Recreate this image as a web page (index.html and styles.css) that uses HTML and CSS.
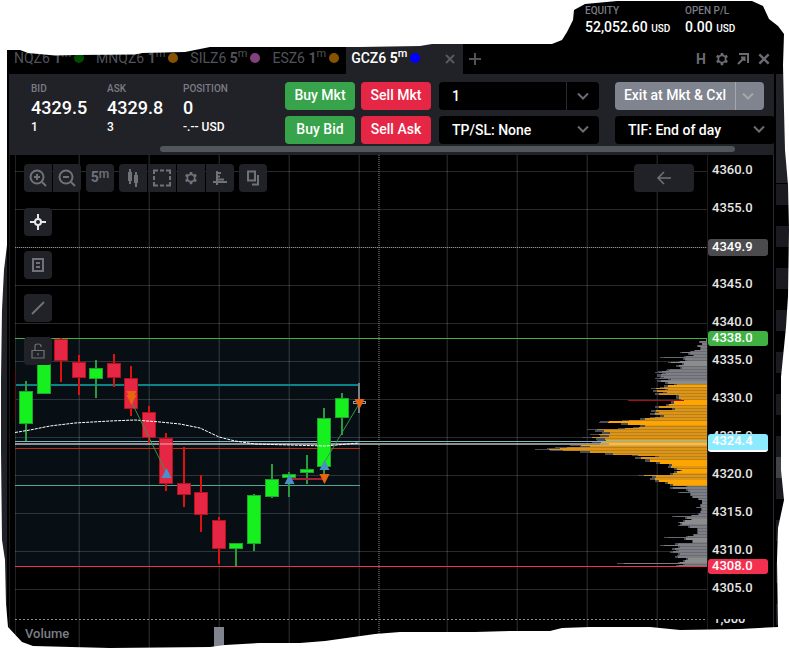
FILE: index.html
```
<!DOCTYPE html>
<html lang="en">
<head>
    <meta charset="utf-8">
    <title>GCZ6 5m</title>
    <link rel="stylesheet" href="styles.css">
</head>

<body>
    <svg class="sprite">
        <symbol id="chevron" viewBox="0 0 12 12"><path d="M1 3.500l5 5 5-5"/></symbol>
        <symbol id="gear" viewBox="0 0 16 16">
            <circle cx="8" cy="8" r="4.200"/>
            <path stroke-width="3" d="M8 1V4M8 12v3M2 4.500l2.500 1.500M11.500 10l2.500 1.500M2 11.500L4.500 10M11.500 6L14 4.500"/>
        </symbol>
        <symbol id="cross" viewBox="0 0 12 12"><path d="M2 2l8 8M10 2l-8 8"/></symbol>
    </svg>

    <div class="app">
        <header class="account">
            <div class="balance">
                <div class="label">EQUITY</div>
                <div class="value">52,052.60 <small>USD</small></div>
            </div>
            <div class="balance">
                <div class="label">OPEN P/L</div>
                <div class="value">0.00 <small>USD</small></div>
            </div>
        </header>

        <div class="workspace">
            <div class="neighbour left"></div>

            <main class="panel">
                <nav class="tabs">
                    <a href="#" class="tab">NQZ6 <b>1</b><sup>m</sup><i class="dot green"></i></a>
                    <a href="#" class="tab">MNQZ6 <b>1</b><sup>m</sup><i class="dot amber"></i></a>
                    <a href="#" class="tab">SILZ6 <b>5</b><sup>m</sup><i class="dot purple"></i></a>
                    <a href="#" class="tab">ESZ6 <b>1</b><sup>m</sup><i class="dot amber"></i></a>
                    <a href="#" class="tab active">GCZ6 <b>5</b><sup>m</sup><i class="dot blue"></i><svg class="close"><use href="#cross"/></svg></a>
                    <button class="add" aria-label="Add tab"><svg viewBox="0 0 14 14"><path d="M7 1v12M1 7h12"/></svg></button>
                    <div class="windowTools">
                        <button>H</button>
                        <button aria-label="Settings"><svg><use href="#gear"/></svg></button>
                        <button aria-label="Pop out"><svg viewBox="0 0 14 14"><path d="M3 2h9v9M5 5.500h3.500V9M8.500 5.500L2 12"/></svg></button>
                        <button aria-label="Close"><svg><use href="#cross"/></svg></button>
                    </div>
                </nav>

                <section class="orderBar">
                    <div class="orderRow">
                        <div class="quote">
                            <div class="label">BID</div>
                            <div class="price">4329.5</div>
                            <div class="size">1</div>
                        </div>
                        <div class="quote">
                            <div class="label">ASK</div>
                            <div class="price">4329.8</div>
                            <div class="size">3</div>
                        </div>
                        <div class="quote position">
                            <div class="label">POSITION</div>
                            <div class="price">0</div>
                            <div class="size">-.-- USD</div>
                        </div>
                        <div class="trade">
                            <button class="buy">Buy Mkt</button>
                            <button class="sell">Sell Mkt</button>
                            <button class="buy">Buy Bid</button>
                            <button class="sell">Sell Ask</button>
                        </div>
                        <div class="fields">
                            <div class="split">
                                <input type="text" value="1" aria-label="Quantity">
                                <button aria-label="Quantities"><svg class="chev"><use href="#chevron"/></svg></button>
                            </div>
                            <div class="select">
                                <select aria-label="TP/SL"><option>TP/SL: None</option></select>
                                <svg class="chev"><use href="#chevron"/></svg>
                            </div>
                        </div>
                        <div class="fields last">
                            <div class="split exit">
                                <button class="main">Exit at Mkt &amp; Cxl</button>
                                <button aria-label="Exit options"><svg class="chev"><use href="#chevron"/></svg></button>
                            </div>
                            <div class="select">
                                <select aria-label="TIF"><option>TIF: End of day</option></select>
                                <svg class="chev"><use href="#chevron"/></svg>
                            </div>
                        </div>
                    </div>
                    <div class="scrollbar"></div>
                </section>

                <section class="chart">
                    <div class="plot">
                        <svg id="plot" viewBox="15 155 693 493" preserveAspectRatio="xMinYMin slice"></svg>

                        <div class="toolbar">
                            <div class="group">
                                <button aria-label="Zoom in"><svg viewBox="0 0 18 18"><circle cx="8" cy="8" r="6.500"/><path d="M13 13l4 4M8 5v6M5 8h6"/></svg></button>
                                <button aria-label="Zoom out"><svg viewBox="0 0 18 18"><circle cx="8" cy="8" r="6.500"/><path d="M13 13l4 4M5 8h6"/></svg></button>
                            </div>
                            <div class="group">
                                <button class="interval">5<sup>m</sup></button>
                            </div>
                            <div class="group">
                                <button aria-label="Chart type"><svg viewBox="0 0 18 18"><path d="M6 0v15M12 3v15"/><path stroke-width="4" d="M6 3v9M12 6v8"/></svg></button>
                                <button aria-label="Select area"><svg viewBox="0 0 18 18"><path d="M1 5V1.500h4M7 1.500h4M13 1.500h4V5M17 7v4M17 13v3.500h-4M11 16.500H7M5 16.500H1V13M1 11V7"/></svg></button>
                                <button class="small" aria-label="Chart settings"><svg><use href="#gear"/></svg></button>
                                <button aria-label="Volume profile"><svg viewBox="0 0 18 18"><path d="M6 2v14M2 13h14M6 4h4M6 7.500h3M6 10.500h7" /></svg></button>
                            </div>
                            <div class="group">
                                <button aria-label="Copy layout"><svg viewBox="0 0 18 18"><path d="M4 2.500h7v9H4zM14 6v9.500H8"/></svg></button>
                            </div>
                        </div>

                        <div class="sideTools">
                            <button class="on" aria-label="Crosshair"><svg viewBox="0 0 18 18"><circle cx="9" cy="9" r="3"/><path d="M9 1v5M9 12v5M1 9h5M12 9h5"/></svg></button>
                            <button aria-label="Notes"><svg viewBox="0 0 18 18"><path d="M4 3h10v12H4zM7 7h4M7 11h4"/></svg></button>
                            <button aria-label="Line"><svg viewBox="0 0 18 18"><path d="M3 15L15 3"/></svg></button>
                            <button aria-label="Lock"><svg viewBox="0 0 18 18"><path stroke-width="1.200" d="M3 8.500h12v7.500H3zM6 8.500V4q0-2 3-2t3 2v1M9 11v2.500"/></svg></button>
                        </div>

                        <button class="back" aria-label="Back"><svg viewBox="0 0 18 18"><path stroke-width="1.500" d="M16 9H3M9 3L3 9l6 6"/></svg></button>
                        <div class="volumeLabel">Volume</div>
                    </div>

                    <div class="axis">
                        <div>4360.0</div>
                        <div>4355.0</div>
                        <div>4350.0</div>
                        <div>4345.0</div>
                        <div>4340.0</div>
                        <div>4335.0</div>
                        <div>4330.0</div>
                        <div>4325.0</div>
                        <div>4320.0</div>
                        <div>4315.0</div>
                        <div>4310.0</div>
                        <div>4305.0</div>
                        <span class="tag cursor">4349.9</span>
                        <span class="tag high">4338.0</span>
                        <span class="tag last">4324.4</span>
                        <span class="tag low">4308.0</span>
                        <span class="volumeScale">1,000</span>
                    </div>
                </section>
            </main>

            <div class="neighbour right"></div>
        </div>

        <!-- ragged white border around the whole window -->
        <svg class="edge" viewBox="0 0 789 648" preserveAspectRatio="none">
            <path fill-rule="evenodd" d="M-1-1H790V649H-1Z
                M7 50L20 50L28 53L55 55.500L75 55L135 54.500L142 53L185 52L210 47L360 47L420 46L432 44L552 44L562 40L567 32L573 20L574 10L585 4L617 1L660 1
                L752 1L763 6L769 19L778 26L784 34L783 65L784 110L785 150L788 185L789 230L788 296L786 327L781 377L781 470L784 500L778 528L777 560L778 627
                L740 629L680 630L650 627L590 627L562 628L550 631L512 631L475 632L400 632L375 634L325 641L300 643L260 643L225 645L210 647L110 648L33 646
                L22 642L8 627L6 604L5 560L2 540L1 450L1 380L2 310L4 270L7 245Z"/>
        </svg>
    </div>

    <script src="chart.js"></script>
</body>
</html>
```
FILE: styles.css
```
* {
    box-sizing: border-box;
}
body {
    margin: 0;
    background: #fff;
    font-family: Roboto, "Liberation Sans", sans-serif;
    font-weight: 500;
    color: #fff;
}
button, input, select {
    font: inherit;
    color: inherit;
    border: 0;
    margin: 0;
    padding: 0;
    background: none;
}
svg {
    display: block;
    fill: none;
    stroke: currentColor;
    stroke-width: 2;
}
.sprite {
    display: none;
}
.app {
    position: relative;
    overflow: hidden;
    min-height: 100vh;
    background: #000;
}
.edge {
    position: absolute;
    top: 0;
    left: 0;
    width: 100%;
    height: 100%;
    fill: #fff;
    stroke: none;
    pointer-events: none;
}

/* account summary */
.account {
    display: flex;
    justify-content: flex-end;
    height: 44px;
    padding: 5px 4px 0 0;
}
.balance {
    width: 100px;
}
.label {
    font-size: 10px;
    line-height: 12px;
    color: #797c85;
}
.value {
    font-size: 14px;
    line-height: 20px;
}
.value small {
    font-size: 10px;
}

/* panel and its neighbours */
.workspace {
    display: flex;
}
.neighbour {
    margin-top: 30px;
    background: #212227;
}
.neighbour.left {
    width: 9px;
    border-right: 2px solid #000;
}
.neighbour.right {
    width: 13px;
    background:
        linear-gradient(#212227 0 109px, transparent 109px 383px, #3f4246 383px 404px, transparent 404px),
        repeating-linear-gradient(#1a1a20 0 5px, #000 5px 26px, #1a1a20 26px 42px);
}
.panel {
    flex: 1;
    min-width: 0;
    margin-right: 2px;
}

/* tabs */
.tabs {
    display: flex;
    height: 30px;
    color: #50535a;
}
.tab {
    display: flex;
    align-items: center;
    padding: 0 7px 2px 5px;
    font-size: 14px;
    font-weight: 400;
    white-space: pre;
    color: inherit;
    text-decoration: none;
}
.tab b {
    font-weight: 700;
}
.tab sup {
    font-size: 11px;
    line-height: 12px;
    margin-bottom: 8px;
}
.tab.active {
    width: 117px;
    background: #212227;
    color: #fff;
    font-weight: 500;
}
.dot {
    width: 10px;
    height: 10px;
    margin-left: 3px;
    border-radius: 50%;
}
.green { background: #004b00; }
.amber { background: #875300; }
.purple { background: #80427f; }
.blue { background: #00f; }
.close {
    width: 12px;
    height: 12px;
    margin-left: auto;
    margin-top: 2px;
    color: #56595f;
}
.add {
    width: 24px;
    padding: 0 5px;
}
.add svg {
    width: 14px;
    height: 14px;
}
.windowTools {
    display: flex;
    align-items: center;
    gap: 7px;
    margin-left: auto;
    padding-right: 3px;
    font-size: 14px;
    font-weight: 700;
    color: #6a6c72;
}
.windowTools button {
    width: 14px;
}
.windowTools svg {
    width: 14px;
    height: 14px;
}

/* order entry */
.orderBar {
    overflow: hidden;
    padding: 8px 0 3px 22px;
    background: #212227;
}
.orderRow {
    display: flex;
    height: 62px;
}
.quote {
    flex: none;
    width: 76px;
}
.quote.position {
    width: 102px;
}
.quote .label {
    margin-top: 1px;
}
.price {
    font-size: 18px;
    line-height: 26px;
}
.size {
    font-size: 12px;
    line-height: 12px;
}
.trade {
    display: grid;
    flex: none;
    grid-template-columns: 70px 70px;
    gap: 6px;
    margin-right: 8px;
}
.trade button, .split, .select {
    height: 28px;
    border-radius: 4px;
    font-size: 14px;
}
.trade button {
    padding-bottom: 2px;
}
.buy { background: #37a34a; }
.sell { background: #e62645; }
.fields {
    display: flex;
    flex: none;
    flex-direction: column;
    gap: 6px;
    width: 160px;
    margin-right: 16px;
}
.split {
    display: flex;
    overflow: hidden;
    background: #000;
}
.split input {
    flex: 1;
    min-width: 0;
    padding-left: 13px;
}
.split button {
    width: 33px;
    padding-left: 10px;
    border-left: 1px solid #2a2b30;
    color: #6a6c72;
}
.split.exit {
    width: 149px;
    background: #80848e;
}
.exit button {
    width: 29px;
    padding-left: 6px;
    border-left: 1px solid #a4a7ae;
    color: #a4a7ae;
}
.exit .main {
    flex: 1;
    padding: 0 0 2px;
    border: 0;
    color: #fff;
}
.select {
    position: relative;
    background: #000;
}
.select select {
    appearance: none;
    width: 100%;
    height: 28px;
    padding-left: 13px;
}
.chev {
    width: 12px;
    height: 12px;
}
.select .chev {
    position: absolute;
    top: 7px;
    right: 10px;
    color: #6a6c72;
    pointer-events: none;
}
.scrollbar {
    height: 6px;
    margin: 2px 39px 0 129px;
    border-radius: 3px;
    background: #50565a;
}

/* chart */
.chart {
    display: flex;
    border-left: 1px solid #1a1a1c;
    border-right: 1px solid #2a2b30;
    padding-left: 5px;
}
.plot {
    position: relative;
    flex: 1;
    min-width: 0;
}
.plot button {
    display: flex;
    align-items: center;
    justify-content: center;
    width: 28px;
    height: 28px;
    background: #212227;
    color: #6f7279;
}
.plot button svg {
    width: 18px;
    height: 18px;
}
.plot .small svg {
    width: 14px;
    height: 14px;
}
.toolbar {
    position: absolute;
    top: 9px;
    left: 9px;
    display: flex;
    gap: 5px;
}
.group {
    display: flex;
    gap: 1px;
    overflow: hidden;
    border-radius: 4px;
}
.plot .interval {
    padding-bottom: 2px;
    font-size: 14px;
    font-weight: 700;
}
.interval sup {
    font-size: 12px;
    font-weight: 500;
    line-height: 12px;
    margin-bottom: 6px;
}
.sideTools {
    position: absolute;
    top: 53px;
    left: 9px;
    display: grid;
    gap: 15px;
}
.sideTools button {
    border-radius: 4px;
}
.plot .on {
    color: #e4e6f0;
}
.plot .back {
    position: absolute;
    top: 9px;
    right: 14px;
    width: 60px;
    border-radius: 4px;
}
.volumeLabel {
    position: absolute;
    top: 471px;
    left: 10px;
    font-size: 13px;
    line-height: 16px;
    color: #7b7e87;
}

/* price axis */
.axis {
    position: relative;
    width: 66px;
    margin-left: -1px;
    padding-left: 4px;
    border-left: 1px solid #1c1c1c;
    font-size: 13px;
    line-height: 38px;
    color: #e6e6e6;
}
.axis div {
    height: 38px;
}
.axis div:first-child {
    margin-top: -4px;
}
.tag {
    position: absolute;
    left: 0;
    width: 60px;
    height: 15px;
    padding-left: 4px;
    border-radius: 3px;
    line-height: 14px;
    color: #fff;
}
.tag.cursor {
    top: 84px;
    height: 17px;
    line-height: 16px;
    background: #4b4b4d;
}
.tag.high {
    top: 176px;
    background: #40b244;
}
.tag.last {
    top: 279px;
    height: 18px;
    background: #8ceaff;
    border-bottom: 2px solid #fff;
}
.tag.low {
    top: 404px;
    background: #f43050;
}
.volumeScale {
    position: absolute;
    top: 464px;
    left: 5px;
    height: 10px;
    overflow: hidden;
    line-height: 0;
}

/* plot drawing */
#plot {
    width: 100%;
    stroke-width: 1;
    overflow: hidden;
}
```
FILE: chart.js
```
const plot = document.getElementById("plot");

function draw(tag, attrs) {
    const el = document.createElementNS("http://www.w3.org/2000/svg", tag);
    for (const key in attrs) el.setAttribute(key, attrs[key]);
    plot.appendChild(el);
}
function rect(x, y, width, height, fill, opacity = 1) {
    draw("rect", { x, y, width, height, fill, opacity, stroke: "none" });
}
function line(d, stroke, extra) {
    draw("path", Object.assign({ d, stroke }, extra));
}

// value area box
rect(15, 338, 345, 228, "#070f15");

// grid
for (const x of [15, 79, 149, 219, 289, 359, 447, 517, 587, 657]) {
    rect(x - 1, 155, 1, 493, "#fff", 0.06);
    rect(x, 155, 1, 493, "#fff", 0.13);
}
for (let y = 171; y < 600; y += 38) rect(15, y, 693, 1, "#fff", 0.16);

// volume profile: [y, left edge]
const profile = [
    [339, 706], [341, 699], [343, 702], [345, 697], [347, 700], [350, 694], [351, 690], [352, 680],
    [353, 688], [355, 693], [356, 684], [357, 660], [358, 683], [360, 685], [361, 678], [362, 668], [363, 682],
    [365, 676], [367, 680], [369, 667], [370, 666], [371, 658], [372, 655], [373, 662], [374, 657], [377, 660],
    [378, 655], [379, 668], [380, 657], [381, 657], [382, 665], [384, 674], [385, 664], [387, 660], [388, 651],
    [389, 665], [390, 653], [392, 663], [393, 655], [395, 676], [399, 679], [400, 671], [404, 666], [406, 655],
    [408, 672], [410, 651], [412, 655], [413, 650], [415, 660], [417, 650], [418, 640], [420, 622], [421, 600],
    [422, 599], [423, 621], [425, 640], [427, 633], [428, 618], [429, 587], [430, 595], [432, 602], [434, 590],
    [435, 600], [437, 582], [438, 596], [440, 597], [441, 592], [443, 600], [445, 570], [446, 580], [447, 555],
    [448, 547], [449, 535], [450, 550], [451, 580], [453, 605], [455, 632], [456, 655], [457, 635], [459, 645],
    [460, 645], [462, 656], [464, 669], [466, 668], [468, 674], [470, 680], [471, 674], [473, 670], [475, 638],
    [476, 652], [478, 650], [480, 655], [482, 665], [484, 670], [486, 686], [487, 670], [489, 686], [491, 688],
    [492, 678], [493, 690], [496, 692], [498, 698], [500, 702], [504, 700], [507, 696], [508, 701], [511, 700],
    [513, 698], [515, 691], [516, 672], [517, 685], [519, 691], [520, 683], [522, 678], [523, 680], [525, 678],
    [526, 688], [528, 697], [532, 697], [534, 693], [536, 686], [537, 664], [538, 684], [540, 692], [542, 692],
    [543, 675], [545, 660], [546, 678], [548, 672], [550, 676], [551, 670], [553, 678], [555, 677], [556, 675],
    [558, 686], [560, 683], [562, 678], [563, 617], [564, 683], [565, 676]
];
// price rows drawn in the brighter shade
const bright = [[361, 365], [381, 383], [385, 386], [400, 404], [421, 424], [440, 445], [460, 465], [469, 472], [480, 484], [519, 523], [538, 541], [558, 562]];

for (let i = 0; i < profile.length; i++) {
    const end = i + 1 < profile.length ? profile[i + 1][0] : 566;
    for (let y = profile[i][0]; y < end; y++) {
        const x = profile[i][1];
        const value = y >= 384 && y < 486;
        const tip = x + Math.round((708 - x) * 0.08);
        let color = value ? (y % 3 ? "#de9414" : "#b8811f") : (y % 3 ? "#7d7f85" : "#696b72");
        if (bright.some(r => y >= r[0] && y <= r[1])) color = value ? "#ffa500" : "#8c8c8c";
        rect(x, y, 708 - x, 1, "#4a4d58");
        rect(tip, y, 708 - tip, 1, color);
    }
}
rect(628, 400, 56, 1, "#a80d12");

// levels
rect(15, 338, 693, 1, "#40b244");
rect(15, 384, 345, 2, "#0c8388");
rect(15, 441, 693, 1, "#79b9c9");
rect(15, 443, 693, 2, "#c9c9c9", 0.7);
rect(15, 448, 345, 1, "#c22e0c");
rect(15, 485, 345, 1, "#4fa894");
rect(15, 566, 693, 1, "#f43050");

// candles: [up, high, body top, body bottom, low]
const candles = [
    [1, 381, 391, 424, 441], [1, 350, 362, 394, 394], [0, 338, 339, 361, 382], [0, 355, 362, 378, 395],
    [1, 360, 368, 379, 398], [0, 354, 363, 378, 387], [0, 366, 378, 409, 416], [0, 406, 412, 438, 443],
    [0, 433, 438, 484, 491], [0, 447, 483, 495, 507], [0, 475, 492, 515, 532], [0, 517, 520, 549, 564],
    [1, 543, 543, 549, 566], [1, 494, 495, 544, 551], [1, 464, 479, 497, 498], [1, 472, 474, 478, 497],
    [1, 455, 469, 473, 484], [1, 408, 418, 467, 474], [1, 393, 398, 418, 435]
];
candles.forEach(([up, high, top, bottom, low], i) => {
    const x = Math.round(26 + i * 17.54);
    rect(x - 1, high, 2, low - high, up ? "#2a9a3c" : "#e01010");
    draw("rect", {
        x: x - 6.5, y: top + 0.5, width: 13, height: bottom - top - 1,
        fill: up ? "#16f01e" : "#e62645", stroke: up ? "#1fa32e" : "#b3131f"
    });
});
rect(358, 383, 2, 30, "#7d7f87");
draw("rect", { x: 353.5, y: 401.5, width: 12, height: 2, fill: "none", stroke: "#9a9ca3" });
rect(15, 370, 1, 51, "#5c1015");
rect(160, 443, 13, 2, "#fff", 0.3);

// moving average
line("M15 432.500L30 430L50 426L75 423L110 421L135 420L160 422L180 424L200 428L219 437L235 441L255 444L289 445L325 446L359 443",
    "#fff", { "stroke-dasharray": "3 1" });

// executions
line("M132 403L166 472M324 463L359 404", "#2f9a45");
rect(289, 478, 35, 2, "#a02038");
function marker(x, y, dir, color) {
    draw("path", { d: `M${x - 5} ${y}h10l-5 ${dir * 10}z`, fill: color, stroke: "none" });
}
marker(131.5, 391, 1, "#e8640f");
marker(131.5, 395, 1, "#e8640f");
marker(166.5, 478, -1, "#4a90c8");
marker(289.5, 484, -1, "#4a90c8");
marker(324.5, 470, -1, "#4a90c8");
marker(324.5, 474, 1, "#e8640f");
marker(359.5, 399, 1, "#e8640f");

// crosshair and volume pane
line("M15 247.500H708M379 155V648", "#8c8c8c", { "stroke-dasharray": "1 1" });
line("M15 619.500H708", "#8c8c8c", { "stroke-dasharray": "2 2" });
rect(214, 627, 10, 21, "#80848e");
```
